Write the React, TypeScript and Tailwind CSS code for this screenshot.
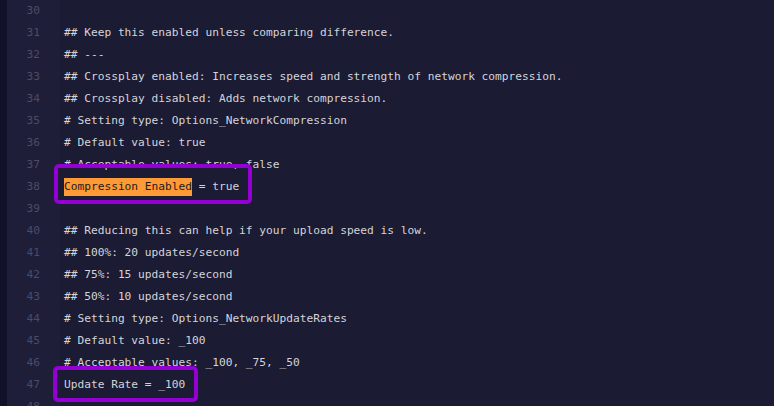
const lines: { n: number; text: string }[] = [
    { n: 30, text: "" },
    { n: 31, text: "## Keep this enabled unless comparing difference." },
    { n: 32, text: "## ---" },
    { n: 33, text: "## Crossplay enabled: Increases speed and strength of network compression." },
    { n: 34, text: "## Crossplay disabled: Adds network compression." },
    { n: 35, text: "# Setting type: Options_NetworkCompression" },
    { n: 36, text: "# Default value: true" },
    { n: 37, text: "# Acceptable values: true, false" },
    { n: 38, text: "@@" },
    { n: 39, text: "" },
    { n: 40, text: "## Reducing this can help if your upload speed is low." },
    { n: 41, text: "## 100%: 20 updates/second" },
    { n: 42, text: "## 75%: 15 updates/second" },
    { n: 43, text: "## 50%: 10 updates/second" },
    { n: 44, text: "# Setting type: Options_NetworkUpdateRates" },
    { n: 45, text: "# Default value: _100" },
    { n: 46, text: "# Acceptable values: _100, _75, _50" },
    { n: 47, text: "Update Rate = _100" },
    { n: 48, text: "" },
]

export default function App() {
    return (
        <div className="relative flex h-[406px] w-[774px] overflow-hidden bg-[#1b1b33] font-['DejaVu_Sans_Mono',monospace] text-[11.2px] text-[#d4d4da]">
            <div className="w-[7px] shrink-0 bg-[#11112a]" />
            <div className="flex w-[53px] shrink-0 flex-col bg-[#1e1e39]">
                {lines.map((l) => (
                    <div key={l.n} className="flex h-[22px] shrink-0 items-center justify-end pr-[20px] text-[#4a4c66]">
                        {l.n}
                    </div>
                ))}
            </div>
            <div className="flex flex-1 flex-col pl-[4px]">
                {lines.map((l) => (
                    <div key={l.n} className="flex h-[22px] shrink-0 items-center whitespace-pre">
                        {l.text === "@@" ? (
                            <>
                                <span className="bg-[#ff9a36] py-[1px] text-[#1b1b1b]">Compression Enabled</span>
                                <span> = true</span>
                            </>
                        ) : (
                            l.text
                        )}
                    </div>
                ))}
            </div>

            {/* highlight boxes drawn over the code */}
            <div className="absolute left-[54px] top-[164px] h-[40px] w-[198px] rounded-[5px] border-4 border-[#9400d3]" />
            <div className="absolute left-[53px] top-[366px] h-[36px] w-[145px] rounded-[5px] border-4 border-[#9400d3]" />
        </div>
    )
}
